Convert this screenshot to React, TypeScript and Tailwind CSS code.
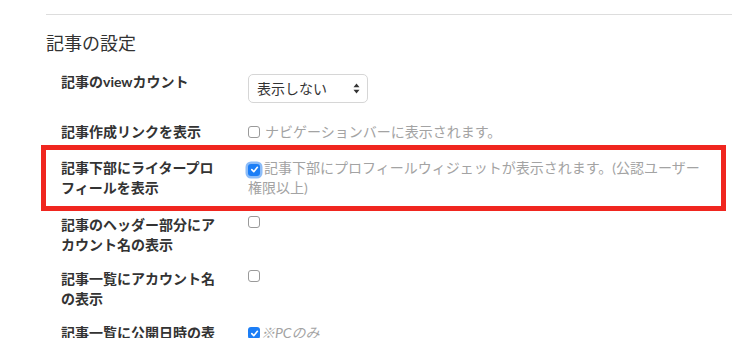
import React from "react";

function Box({ checked, focus }: { checked?: boolean; focus?: boolean }) {
  if (!checked) {
    return (
      <span className="inline-block w-[12px] h-[12px] rounded-[3px] border border-[#9a9a9a] bg-white align-[-1px] shrink-0" />
    );
  }
  return (
    <span
      className={
        "inline-flex items-center justify-center w-[12px] h-[12px] rounded-[3px] bg-[#1c7ef6] align-[-1px] shrink-0 " +
        (focus ? "ring-[2.5px] ring-[#8cbcf8]" : "")
      }
    >
      <svg width="9" height="9" viewBox="0 0 10 10">
        <path d="M2 5.2 L4.2 7.4 L8.2 2.6" fill="none" stroke="white" strokeWidth="1.8" strokeLinecap="round" strokeLinejoin="round" />
      </svg>
    </span>
  );
}

type Row = { label: string[]; value: React.ReactNode; mb: string };

export default function App() {
  const rows: Row[] = [
    {
      label: ["記事のviewカウント"],
      mb: "mb-[19px]",
      value: (
        <div className="mt-[2px] w-[120px] h-[29px] rounded-[5px] border border-[#d6d6d6] bg-white flex items-center justify-between pl-[8px] pr-[7px] text-[14px] text-[#333]">
          <span>表示しない</span>
          <svg width="7" height="11" viewBox="0 0 7 11">
            <path d="M3.5 0.5 L6.5 4.3 L0.5 4.3 Z" fill="#333" />
            <path d="M3.5 10.5 L6.5 6.7 L0.5 6.7 Z" fill="#333" />
          </svg>
        </div>
      ),
    },
    {
      label: ["記事作成リンクを表示"],
      mb: "mb-[16px]",
      value: (
        <div className="text-[14px] leading-[20px] text-[#a3a3a3] flex items-center gap-[5px]">
          <Box />
          <span>ナビゲーションバーに表示されます。</span>
        </div>
      ),
    },
    {
      label: ["記事下部にライタープロ", "フィールを表示"],
      mb: "mb-[17px]",
      value: (
        <div className="text-[14px] leading-[20px] text-[#a3a3a3]">
          <span className="mr-[4px]">
            <Box checked focus />
          </span>
          記事下部にプロフィールウィジェットが表示されます。(公認ユーザー権限以上)
        </div>
      ),
    },
    {
      label: ["記事のヘッダー部分にア", "カウント名の表示"],
      mb: "mb-[14px]",
      value: (
        <div className="h-[20px] flex items-start pt-[1px]">
          <Box />
        </div>
      ),
    },
    {
      label: ["記事一覧にアカウント名", "の表示"],
      mb: "mb-[14px]",
      value: (
        <div className="h-[20px] flex items-start pt-[1px]">
          <Box />
        </div>
      ),
    },
    {
      label: ["記事一覧に公開日時の表", "示"],
      mb: "mb-[14px]",
      value: (
        <div className="text-[14px] leading-[20px] text-[#a3a3a3] flex items-center gap-[1px]">
          <Box checked />
          <span className="italic">※PCのみ</span>
        </div>
      ),
    },
  ];

  return (
    <div
      className="relative w-[732px] h-[338px] overflow-hidden bg-white text-[#333]"
      style={{ fontFamily: "Lato, 'Noto Sans CJK JP', sans-serif" }}
    >
      <div className="pt-[14px] pl-[46px]">
        <div className="h-px bg-[#dddddd]" />
        <h2 className="mt-[15px] text-[18px] leading-[26px] font-normal text-[#333]">記事の設定</h2>
        <div className="mt-[16px] pl-[15px]">
          {rows.map((r, i) => (
            <div key={i} className={"flex items-start " + r.mb}>
              <div className="w-[187px] shrink-0 text-[14px] leading-[20px] font-bold text-[#333]">
                {r.label.map((l, j) => (
                  <div key={j}>{l}</div>
                ))}
              </div>
              <div className="w-[462px]">{r.value}</div>
            </div>
          ))}
        </div>
      </div>
      <div className="absolute left-[41px] top-[145px] w-[685px] h-[66px] border-[5px] border-[#f0261f] pointer-events-none" />
    </div>
  );
}
